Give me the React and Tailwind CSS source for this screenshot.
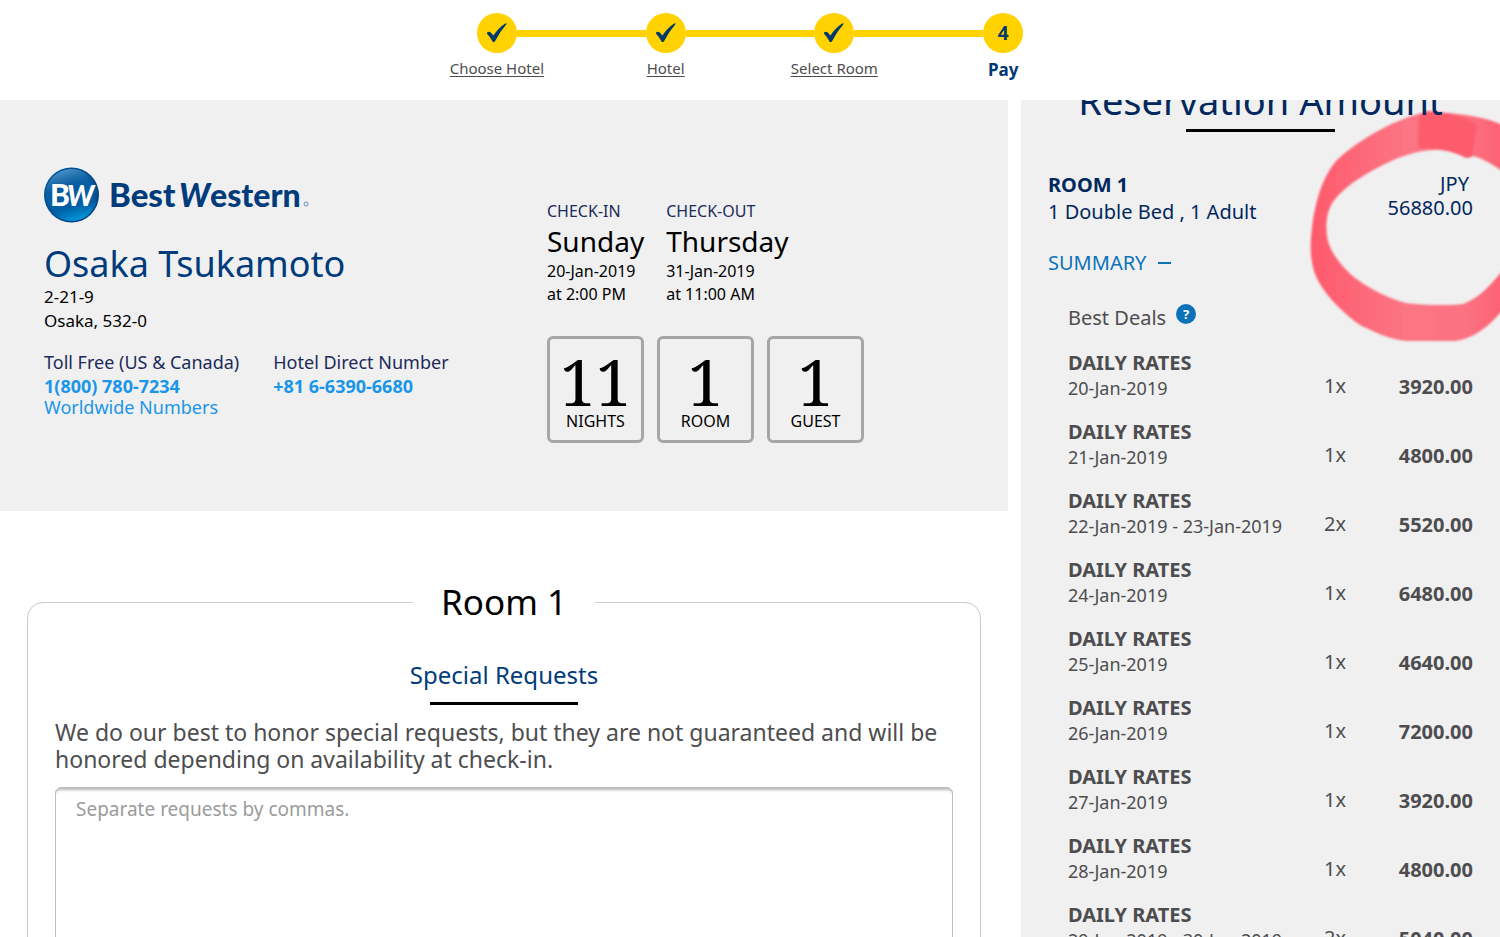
import React, { useState } from "react";

const steps = [
  { label: "Choose Hotel", done: true },
  { label: "Hotel", done: true },
  { label: "Select Room", done: true },
  { label: "Pay", done: false },
];

const stats = [
  { value: 11, label: "NIGHTS" },
  { value: 1, label: "ROOM" },
  { value: 1, label: "GUEST" },
];

const stay = [
  { label: "CHECK-IN", day: "Sunday", date: "20-Jan-2019", time: "at 2:00 PM" },
  { label: "CHECK-OUT", day: "Thursday", date: "31-Jan-2019", time: "at 11:00 AM" },
];

const rates = [
  { date: "20-Jan-2019", qty: 1, amount: "3920.00" },
  { date: "21-Jan-2019", qty: 1, amount: "4800.00" },
  { date: "22-Jan-2019 - 23-Jan-2019", qty: 2, amount: "5520.00" },
  { date: "24-Jan-2019", qty: 1, amount: "6480.00" },
  { date: "25-Jan-2019", qty: 1, amount: "4640.00" },
  { date: "26-Jan-2019", qty: 1, amount: "7200.00" },
  { date: "27-Jan-2019", qty: 1, amount: "3920.00" },
  { date: "28-Jan-2019", qty: 1, amount: "4800.00" },
  { date: "29-Jan-2019 - 30-Jan-2019", qty: 2, amount: "5040.00" },
];

const CheckMark = () => (
  <svg viewBox="0 0 22 22" className="size-[22px]" aria-hidden="true">
    <path
      d="M1 10.5 Q2.8 9 4.5 10.3 L7.4 13.6 Q12.5 6 19.2 1.6 Q21 0.8 20.4 2.2 Q14 9.5 9 19.2 Q7.6 21 6.4 19.2 Q4 14.6 1.2 12 Z"
      fill="#00386b"
    />
  </svg>
);

const Stepper = () => (
  <ol className="grid grid-cols-4 w-[45%] mx-auto">
    {steps.map((step, i) => (
      <li key={step.label} className="flex flex-col items-center">
        <div className="flex items-center w-full">
          <span className={i === 0 ? "grow h-[7px]" : "grow h-[7px] bg-[#ffd200]"} />
          <span className="flex items-center justify-center size-10 rounded-full bg-[#ffd200] text-[19px] font-bold text-[#00386b]">
            {step.done ? <CheckMark /> : i + 1}
          </span>
          <span
            className={i === steps.length - 1 ? "grow h-[7px]" : "grow h-[7px] bg-[#ffd200]"}
          />
        </div>
        {step.done ? (
          <a href="#" className="mt-1 text-[15px] leading-[22px] text-[#4d4d4f] underline underline-offset-2">
            {step.label}
          </a>
        ) : (
          <span className="mt-1 text-[17px] leading-[26px] font-bold text-[#003876]">
            {step.label}
          </span>
        )}
      </li>
    ))}
  </ol>
);

const Logo = () => (
  <svg
    viewBox="0 0 268 56"
    className="w-[268px] h-14"
    role="img"
    aria-label="Best Western"
  >
    <defs>
      <radialGradient id="ball" cx="0.45" cy="0.45" r="0.6">
        <stop offset="0" stopColor="#004f94" />
        <stop offset="0.65" stopColor="#00599f" />
        <stop offset="1" stopColor="#013a78" />
      </radialGradient>
      <linearGradient id="shine" x1="0.3" y1="0" x2="0.6" y2="1">
        <stop offset="0" stopColor="#7ab2dc" stopOpacity="0.7" />
        <stop offset="0.35" stopColor="#3c86c0" stopOpacity="0.15" />
        <stop offset="0.7" stopColor="#0091d4" stopOpacity="0.1" />
        <stop offset="1" stopColor="#00a3e6" stopOpacity="0.95" />
      </linearGradient>
    </defs>
    <circle cx="27.5" cy="28" r="27.5" fill="url(#ball)" />
    <circle cx="27.5" cy="28" r="26" fill="url(#shine)" />
    <g fontFamily="Lato, sans-serif" fontWeight="900">
      <g fill="#ffffff">
        <text x="6" y="39" fontSize="30">B</text>
        <text x="23" y="39" fontSize="28" fontStyle="italic">W</text>
      </g>
      <g fill="#003b7c">
        <text x="65" y="40" fontSize="33">Best</text>
        <text x="135" y="40" fontSize="32" fontStyle="italic">W</text>
        <text x="166" y="40" fontSize="32">estern</text>
      </g>
    </g>
    <circle cx="262" cy="37" r="2" fill="none" stroke="#6c8fb8" />
  </svg>
);

const HotelSummary = () => (
  <section className="flex bg-[#f0f0f0] pt-[67px] pb-[68px] pl-11">
    <div className="w-1/2 mr-[21px]">
      <Logo />
      <h1 className="mt-[17px] text-[36px] leading-[48px] text-[#003b7c]">Osaka Tsukamoto</h1>
      <address className="-mt-[3px] not-italic text-[17px] leading-6 text-black">
        2-21-9
        <br />
        Osaka, 532-0
      </address>
      <div className="mt-[17px] flex gap-[34px] text-[18px] leading-5 text-[#1c2b5a]">
        <div className="flex flex-col">
          <span className="leading-6">Toll Free (US &amp; Canada)</span>
          <a href="#" className="font-bold leading-6 text-[#1a96e8]">1(800) 780-7234</a>
          <a href="#" className="leading-[18px] text-[#1a96e8]">Worldwide Numbers</a>
        </div>
        <div className="flex flex-col">
          <span className="leading-6">Hotel Direct Number</span>
          <a href="#" className="font-bold leading-6 text-[#1a96e8]">+81 6-6390-6680</a>
        </div>
      </div>
    </div>
    <div className="pt-[33px]">
      <div className="flex gap-[22px]">
        {stay.map((item) => (
          <div key={item.label} className="text-[16px] leading-[23px] text-black">
            <p className="text-[#1c2b5a]">{item.label}</p>
            <p className="text-[28px] leading-[37px]">{item.day}</p>
            <p>{item.date}</p>
            <p>{item.time}</p>
          </div>
        ))}
      </div>
      <div className="mt-[30px] flex gap-[13px]">
        {stats.map((stat) => (
          <div
            key={stat.label}
            className="flex flex-col items-center w-[97px] h-[107px] pt-[14px] rounded-md border-3 border-[#a6a6a6] text-black"
          >
            <span className="font-['Noto_Serif','Liberation_Serif',serif] text-[64px] leading-[58px]">
              {stat.value}
            </span>
            <span className="text-[16px] leading-5">{stat.label}</span>
          </div>
        ))}
      </div>
    </div>
  </section>
);

const RoomForm = () => {
  const [requests, setRequests] = useState("");

  return (
    <form className="px-[27px] pt-[67px]">
      <fieldset className="rounded-2xl border border-[#cccccc] px-[27px] pb-7">
        <legend className="mx-auto px-7 text-[35px] leading-[48px] text-black">Room 1</legend>
        <div className="flex flex-col items-center pt-[33px]">
          <label htmlFor="requests" className="text-[24px] leading-8 text-[#003b7c]">
            Special Requests
          </label>
          <span className="mt-[11px] w-[148px] h-[3px] bg-black" />
        </div>
        <p className="mt-[14px] text-[23px] leading-[27px] text-[#4d4d4f]">
          We do our best to honor special requests, but they are not guaranteed and will be
          honored depending on availability at check-in.
        </p>
        <textarea
          id="requests"
          value={requests}
          onChange={(e) => setRequests(e.target.value)}
          placeholder="Separate requests by commas."
          className="mt-[14px] block w-full h-48 resize-none rounded-md border border-[#bdbdbd] bg-white px-5 py-[7px] text-[19px] leading-7 text-[#4d4d4f] placeholder:text-[#9b9b9b] shadow-[inset_0_5px_3px_-3px_#b8b8b8]"
        />
      </fieldset>
    </form>
  );
};

// Trazo de rotulador alrededor del importe
const MarkerCircle = () => (
  <svg
    viewBox="0 0 200 250"
    className="absolute right-0 top-0 -z-10 w-[200px] h-[250px] pointer-events-none"
    aria-hidden="true"
  >
    <defs>
      <linearGradient id="marker" x1="0" y1="0" x2="1" y2="0">
        <stop offset="0" stopColor="#fe596b" />
        <stop offset="0.15" stopColor="#fe6374" />
        <stop offset="0.5" stopColor="#fb7584" />
        <stop offset="0.8" stopColor="#fb7282" />
        <stop offset="1" stopColor="#fe6071" />
      </linearGradient>
      <filter id="soft">
        <feGaussianBlur stdDeviation="1" />
      </filter>
    </defs>
    <g filter="url(#soft)">
      <path
        d="M206 27 C190 18 165 13 126 12 C98 18 60 38 36 61 C20 80 14 110 12 128 C10 145 10 156 14 171 C20 190 40 211 60 225 C75 232 90 240 107 241 L155 241 C175 238 190 226 206 206 L206 166 C192 184 180 198 163 204 C150 206 120 205 106 203 C90 199 70 189 58 180 C44 170 29 152 27 136 C25 120 28 106 37 97 C50 82 75 68 98 58 C125 48 145 47 166 55 C180 56 192 64 206 74 Z"
        fill="url(#marker)"
      />
      <path
        d="M126 11 C150 12 168 17 177 25 L172 57 L166 58 C151 50 138 49 118 48 L119 18 Z"
        fill="#fd5c6c"
      />
    </g>
  </svg>
);

const ReservationAmount = () => {
  const [open, setOpen] = useState(true);

  return (
    <aside className="relative isolate overflow-hidden bg-[#f0f0f0] px-[27px] text-[#00285e]">
      <div className="-mt-[26px] flex flex-col items-center">
        <h2 className="text-[38px] leading-[52px] whitespace-nowrap">Reservation Amount</h2>
        <span className="mt-[3px] w-[149px] h-[3px] bg-black" />
      </div>
      <div className="mt-[39px] flex justify-between text-[20px]">
        <div className="leading-[27px]">
          <p className="font-bold">ROOM 1</p>
          <p>1 Double Bed , 1 Adult</p>
        </div>
        <div className="pt-px text-right leading-6">
          <p className="pr-1">JPY</p>
          <p>56880.00</p>
        </div>
      </div>
      <button
        type="button"
        onClick={() => setOpen(!open)}
        className="mt-6 flex items-center gap-3 text-[20px] leading-7 text-[#0c72b8]"
      >
        SUMMARY
        <span className="w-[13px] h-[2px] bg-[#0c72b8]" />
      </button>
      {open && (
        <div className="pl-5 pt-[27px] text-[#4d4d4f]">
          <div className="flex gap-[10px] text-[20px] leading-7">
            Best Deals
            <button
              type="button"
              className="flex items-center justify-center size-5 rounded-full bg-[#0c72b8] text-[13px] font-bold text-white"
            >
              ?
            </button>
          </div>
          <table className="mt-[17px] w-full">
            <tbody>
              {rates.map((rate) => (
                <tr key={rate.date} className="h-[69px] align-top">
                  <td className="w-[256px] p-0">
                    <p className="text-[20px] leading-7 font-bold">DAILY RATES</p>
                    <p className="text-[18px] leading-[22px]">{rate.date}</p>
                  </td>
                  <td className="p-0 pt-[25px] text-[20px] leading-6">{rate.qty}x</td>
                  <td className="p-0 pt-6 text-right text-[20px] leading-7 font-bold">{rate.amount}</td>
                </tr>
              ))}
            </tbody>
          </table>
        </div>
      )}
      <MarkerCircle />
    </aside>
  );
};

const App = () => (
  <div className="flex flex-col h-screen overflow-hidden bg-white font-['Noto_Sans',sans-serif]">
    <header className="h-[100px] shrink-0 pt-[13px]">
      <Stepper />
    </header>
    <main className="grid grow min-h-0 grid-cols-[1008fr_479fr] gap-[13px]">
      <div className="overflow-hidden">
        <HotelSummary />
        <RoomForm />
      </div>
      <ReservationAmount />
    </main>
  </div>
);

export default App;
